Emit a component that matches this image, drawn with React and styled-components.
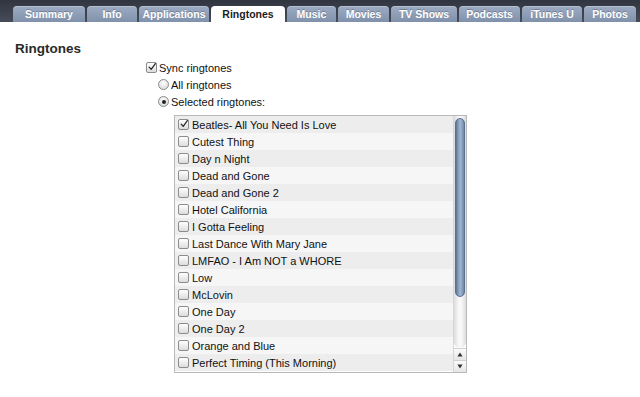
import React from "react";
import styled, { createGlobalStyle } from "styled-components";

const Global = createGlobalStyle`
  html, body { margin: 0; padding: 0; background: #fff; }
  body { width: 640px; height: 397px; overflow: hidden; font-family: "Liberation Sans", Arial, sans-serif; }
`;

const Page = styled.div`
  width: 640px;
  height: 397px;
  background: #fff;
  display: flex;
  flex-direction: column;
`;

const TabBar = styled.div`
  height: 22px;
  flex: none;
  display: flex;
  align-items: flex-end;
  gap: 2px;
  padding-left: 13px;
  background: linear-gradient(#30353f, #464c58);
  box-sizing: border-box;
`;

const Tab = styled.div`
  width: ${(p) => p.w}px;
  height: 16px;
  box-sizing: border-box;
  border-radius: 4px 4px 0 0;
  display: flex;
  align-items: center;
  justify-content: center;
  font: bold 10.5px "Liberation Sans", Arial, sans-serif;
  color: ${(p) => (p.active ? "#1c1c1c" : "#fff")};
  background: ${(p) =>
    p.active ? "#fff" : "linear-gradient(#9dacc3, #8091ab)"};
  text-shadow: ${(p) => (p.active ? "none" : "0 -1px 0 rgba(40,50,70,0.35)")};
  box-shadow: ${(p) =>
    p.active ? "none" : "inset 0 1px 0 rgba(255,255,255,0.25)"};
`;

const Content = styled.div`
  padding: 19px 0 0 15px;
`;

const Heading = styled.h2`
  margin: 0;
  font: bold 13.5px/16px "Liberation Sans", Arial, sans-serif;
  color: #2a2a2a;
`;

const Options = styled.div`
  margin: 2px 0 0 131px;
  display: flex;
  flex-direction: column;
`;

const OptionRow = styled.div`
  height: 17px;
  display: flex;
  align-items: center;
  gap: 2px;
  padding-left: ${(p) => p.indent || 0}px;
  font-size: 11px;
  color: #111;
`;

const Box = styled.span`
  width: 11px;
  height: 11px;
  flex: none;
  box-sizing: border-box;
  border: 1px solid #8c8c8c;
  border-radius: 2px;
  background: linear-gradient(#ffffff, #dcdcdc);
  display: flex;
  align-items: center;
  justify-content: center;
`;

const Radio = styled.span`
  width: 11px;
  height: 11px;
  flex: none;
  box-sizing: border-box;
  border: 1px solid #8a8a8a;
  border-radius: 50%;
  background: radial-gradient(circle at 50% 35%, #ffffff, #d2d2d2);
  display: flex;
  align-items: center;
  justify-content: center;
`;

const Dot = styled.span`
  width: 4px;
  height: 4px;
  border-radius: 50%;
  background: #222;
`;

const Check = () => (
  <svg width="10" height="10" viewBox="0 0 10 10" style={{ marginTop: -2, marginLeft: 1 }}>
    <path d="M1.5 5.2 L4 8 L9.2 0.8" fill="none" stroke="#2b2b2b" strokeWidth="1.6" strokeLinecap="round" strokeLinejoin="round" />
  </svg>
);

const ListBox = styled.div`
  margin: 5px 0 0 28px;
  width: 293px;
  height: 258px;
  box-sizing: border-box;
  border: 1px solid #b9b9b9;
  display: flex;
  background: #fff;
`;

const Rows = styled.div`
  flex: 1;
  overflow: hidden;
`;

const ListRow = styled.div`
  height: 17px;
  display: flex;
  align-items: center;
  gap: 3px;
  padding-left: 3px;
  font-size: 11px;
  color: #111;
  background: ${(p) => (p.odd ? "#ededed" : "#f6f6f6")};
  white-space: nowrap;
`;

const ScrollBar = styled.div`
  width: 13px;
  flex: none;
  display: flex;
  flex-direction: column;
  border-left: 1px solid #d6d6d6;
  box-sizing: border-box;
`;

const Track = styled.div`
  flex: 1;
  padding: 2px 1px 0 1px;
  background: linear-gradient(90deg, #dcdcdc, #f8f8f8 40%, #f8f8f8 60%, #dcdcdc);
  border-radius: 0 0 6px 6px;
  box-sizing: border-box;
`;

const Thumb = styled.div`
  height: 179px;
  border-radius: 5px;
  background: linear-gradient(90deg, #5d7594, #8ea6c4 35%, #9fb5d0 55%, #6f88a8);
  border: 1px solid #5a7090;
  box-sizing: border-box;
`;

const Arrow = styled.div`
  height: 12px;
  display: flex;
  align-items: center;
  justify-content: center;
  background: linear-gradient(#fafafa, #e6e6e6);
  border-top: 1px solid #d0d0d0;
  box-sizing: border-box;
`;

const Tri = ({ up }) => (
  <svg width="6" height="5" viewBox="0 0 6 5">
    <path d={up ? "M3 0.5 L5.6 4.5 L0.4 4.5 Z" : "M0.4 0.5 L5.6 0.5 L3 4.5 Z"} fill="#333" />
  </svg>
);

const tabs = [
  ["Summary", 72],
  ["Info", 50],
  ["Applications", 70],
  ["Ringtones", 74],
  ["Music", 49],
  ["Movies", 51],
  ["TV Shows", 66],
  ["Podcasts", 61],
  ["iTunes U", 60],
  ["Photos", 52],
];

const ringtones = [
  "Beatles- All You Need Is Love",
  "Cutest Thing",
  "Day n Night",
  "Dead and Gone",
  "Dead and Gone 2",
  "Hotel California",
  "I Gotta Feeling",
  "Last Dance With Mary Jane",
  "LMFAO - I Am NOT a WHORE",
  "Low",
  "McLovin",
  "One Day",
  "One Day 2",
  "Orange and Blue",
  "Perfect Timing (This Morning)",
];

export default function App() {
  return (
    <Page>
      <Global />
      <TabBar>
        {tabs.map(([t, w]) => (
          <Tab key={t} w={w} active={t === "Ringtones"}>
            {t}
          </Tab>
        ))}
      </TabBar>
      <Content>
        <Heading>Ringtones</Heading>
        <Options>
          <OptionRow>
            <Box><Check /></Box>
            <span>Sync ringtones</span>
          </OptionRow>
          <OptionRow indent={12}>
            <Radio />
            <span>All ringtones</span>
          </OptionRow>
          <OptionRow indent={12}>
            <Radio><Dot /></Radio>
            <span>Selected ringtones:</span>
          </OptionRow>
          <ListBox>
            <Rows>
              {ringtones.map((r, i) => (
                <ListRow key={r} odd={i % 2 === 0}>
                  <Box>{i === 0 ? <Check /> : null}</Box>
                  <span>{r}</span>
                </ListRow>
              ))}
            </Rows>
            <ScrollBar>
              <Track>
                <Thumb />
              </Track>
              <Arrow><Tri up /></Arrow>
              <Arrow><Tri /></Arrow>
            </ScrollBar>
          </ListBox>
        </Options>
      </Content>
    </Page>
  );
}
